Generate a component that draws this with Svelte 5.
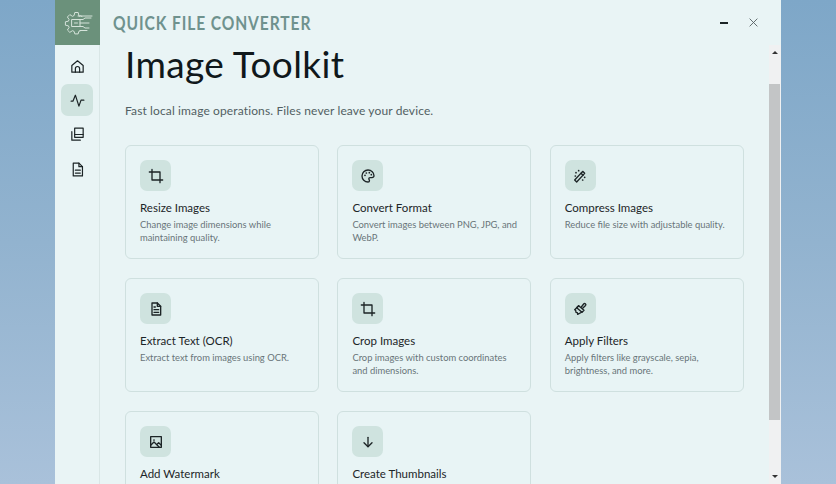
<script>
    const nav = [
        { name: "home", paths: ["M4 10.500 12 4l8 6.500V20H4z", "M9 20v-5a3 3 0 0 1 6 0v5"] },
        { name: "activity", active: true, paths: ["M3 13h2.500L9 4.500 14 20l3-8.500h4"] },
        { name: "pages", paths: ["M8 3h12v13H8z", "M8 12h12", "M4 8v12h12"] },
        { name: "doc", paths: ["M6 3h8l5 5v13H6z", "M14 3v5h5", "M9 13h7", "M9 17h7"] }
    ];

    const tools = [
        { title: "Resize Images", text: "Change image dimensions while maintaining quality.", paths: ["M6 2v16h16", "M2 6h16v16"] },
        { title: "Convert Format", text: "Convert images between PNG, JPG, and WebP.", paths: ["M12 3a9 9 0 1 0 0 18c1.600 0 2.200-1 2.200-2 0-1.400-1-1.700-1-2.800 0-1 .8-1.700 1.800-1.700H18a3 3 0 0 0 3-3c0-4.700-4-8.500-9-8.500z"], dots: [[7.500, 11], [9.500, 7.500], [14, 7], [17, 10]] },
        { title: "Compress Images", text: "Reduce file size with adjustable quality.", paths: ["M4 18 16 5l3 3L7 21z", "M13.500 8l3 3"], dots: [[6, 7], [10, 4], [5, 12], [19, 14], [16, 18]] },
        { title: "Extract Text (OCR)", text: "Extract text from images using OCR.", paths: ["M6 3h8l5 5v13H6z", "M14 3v5h5", "M9 13h7", "M9 17h7", "M9 9h2"] },
        { title: "Crop Images", text: "Crop images with custom coordinates and dimensions.", paths: ["M6 2v16h16", "M2 6h16v16"] },
        { title: "Apply Filters", text: "Apply filters like grayscale, sepia, brightness, and more.", paths: ["M14 9l3.500-4.500a1.800 1.800 0 0 1 2.800 2.300L16 11", "M10 7l8 7-3 3-8-7z", "M10 7 4 13l1.500 1 .5 3 2 .5.500 2.500 6.500-3.500"] },
        { title: "Add Watermark", text: "Add text watermarks to your images.", paths: ["M4 4h16v16H4z", "M4 17l5-5 8 8", "M14 15l2-2 4 4"], dots: [[9, 9]] },
        { title: "Create Thumbnails", text: "Generate small preview images in bulk.", paths: ["M12 5v14", "M6 13l6 6 6-6"] }
    ];
</script>

<div class="window">
    <nav class="sidebar">
        <div class="logo">
            <svg viewBox="0 0 30 24" width="30" height="24">
                <path d="M19 5.500 17.500 4.800 16 5.200 15.200 1.500h-3.400l-.7 3-1.700.8L6.800 3.600 4.400 6l1.700 2.500-.7 1.700-3 .6v3.400l3 .6.700 1.700-1.700 2.500 2.400 2.400 2.600-1.700 1.700.7.700 2.500h3.400l.6-2.500 1.700-.7" />
                <path d="M9 8.500h8v7H9z" />
                <path d="M11.500 12h3" />
                <path d="M15 5h14M17 8.500h3l2-1.500h6M17 12h9M17 15.500h3l2 1.500h4M17 19.500h7" />
            </svg>
        </div>
        <div class="navItems">
            {#each nav as item}
                <div class="navItem" class:active={item.active}>
                    <svg viewBox="0 0 24 24" width="17" height="17">
                        {#each item.paths as d}<path {d} />{/each}
                    </svg>
                </div>
            {/each}
        </div>
    </nav>

    <div class="main">
        <header class="titleBar">
            <span class="appName">QUICK FILE CONVERTER</span>
            <div class="winButtons">
                <span class="minimize"></span>
                <svg viewBox="0 0 10 10" width="9" height="9"><path d="M1 1l8 8M9 1 1 9" /></svg>
            </div>
        </header>

        <div class="body">
            <div class="content">
                <h1>Image Toolkit</h1>
                <p class="lead">Fast local image operations. Files never leave your device.</p>
                <div class="grid">
                    {#each tools as tool}
                        <div class="card">
                            <div class="iconBox">
                                <svg viewBox="0 0 24 24" width="16" height="16">
                                    {#each tool.paths as d}<path {d} />{/each}
                                    {#each tool.dots || [] as dot}<circle cx={dot[0]} cy={dot[1]} r="1.300" class="dot" />{/each}
                                </svg>
                            </div>
                            <h3>{tool.title}</h3>
                            <p>{tool.text}</p>
                        </div>
                    {/each}
                </div>
            </div>

            <div class="scrollbar">
                <span class="arrowUp"></span>
                <div class="track"><div class="thumb"></div></div>
                <span class="arrowDown"></span>
            </div>
        </div>
    </div>
</div>

<style>
:global(body) {
    margin: 0;
    height: 484px;
    overflow: hidden;
    background: linear-gradient(180deg, #7ea7c8 0%, #92b3cf 50%, #a9c1da 100%);
}
.window {
    display: flex;
    height: 484px;
    margin: 0 55px;
    background: #e9f4f5;
    font-family: Lato, "Liberation Sans", sans-serif;
    overflow: hidden;
}
svg {
    display: block;
    fill: none;
    stroke: #1c2426;
    stroke-width: 2;
    stroke-linecap: round;
    stroke-linejoin: round;
}
.sidebar {
    width: 45px;
    flex: none;
    box-sizing: border-box;
    border-right: 1px solid #d9e6e6;
}
.logo {
    height: 45px;
    margin-right: -1px;
    background: #6b917b;
    display: flex;
    align-items: center;
    justify-content: center;
}
.logo svg {
    stroke: #d5e3da;
    stroke-width: 1;
}
.navItems {
    display: flex;
    flex-direction: column;
    align-items: center;
    gap: 2.400px;
    padding-top: 5px;
}
.navItem {
    width: 32px;
    height: 32px;
    border-radius: 7px;
    display: flex;
    align-items: center;
    justify-content: center;
}
.navItem svg {
    stroke-width: 1.700;
}
.navItem.active {
    background: #cfe3df;
}
.main {
    flex: 1;
    min-width: 0;
    display: flex;
    flex-direction: column;
}
.titleBar {
    height: 45px;
    flex: none;
    display: flex;
    align-items: center;
    justify-content: space-between;
    padding: 0 23px 0 13px;
}
.appName {
    font-size: 19px;
    font-weight: 700;
    letter-spacing: 1.100px;
    color: #6f928e;
    /* the real logotype is a condensed face, none is installed */
    transform: scaleX(.82);
    transform-origin: left center;
}
.winButtons {
    display: flex;
    align-items: center;
    gap: 21px;
}
.winButtons svg {
    stroke: #555f62;
    stroke-width: 1;
}
.minimize {
    width: 8px;
    height: 2px;
    background: #1c2426;
}
.body {
    flex: 1;
    min-height: 0;
    display: flex;
}
.content {
    flex: 1;
    min-width: 0;
    overflow: hidden;
    padding: 0 25px;
}
h1 {
    margin: 0;
    font-size: 37px;
    font-weight: 400;
    line-height: 38px;
    letter-spacing: .35px;
    color: #10181b;
}
.lead {
    margin: 20px 0 0;
    font-size: 12px;
    line-height: 16px;
    letter-spacing: .125px;
    color: #525f63;
}
.grid {
    display: grid;
    grid-template-columns: 194px 194px 194px;
    column-gap: 18.400px;
    row-gap: 19px;
    margin-top: 26px;
}
.card {
    height: 114px;
    box-sizing: border-box;
    padding: 14px;
    border: 1px solid #cfe0df;
    border-radius: 6px;
    background: #e8f4f5;
}
.iconBox {
    width: 31px;
    height: 31px;
    border-radius: 7px;
    background: #cfe3df;
    display: flex;
    align-items: center;
    justify-content: center;
}
.dot {
    fill: #1c2426;
    stroke: none;
}
h3 {
    margin: 9px 0 0;
    font-size: 11.500px;
    font-weight: 400;
    line-height: 16px;
    color: #1c2528;
}
.card p {
    margin: 2px -5px 0 0;
    font-size: 9.400px;
    line-height: 13px;
    color: #687479;
}
.scrollbar {
    width: 12px;
    flex: none;
    display: flex;
    flex-direction: column;
    align-items: center;
    background: #f0f1f2;
}
.track {
    flex: 1;
    width: 100%;
    padding: 30px 1px 0 0;
    box-sizing: border-box;
}
.thumb {
    height: 336px;
    background: #c3c5c6;
}
.arrowUp, .arrowDown {
    width: 0;
    height: 0;
    border-left: 3px solid transparent;
    border-right: 3px solid transparent;
}
.arrowUp {
    margin-top: 6px;
    border-bottom: 3px solid #333;
}
.arrowDown {
    margin-bottom: 6px;
    border-top: 3px solid #333;
}
</style>
